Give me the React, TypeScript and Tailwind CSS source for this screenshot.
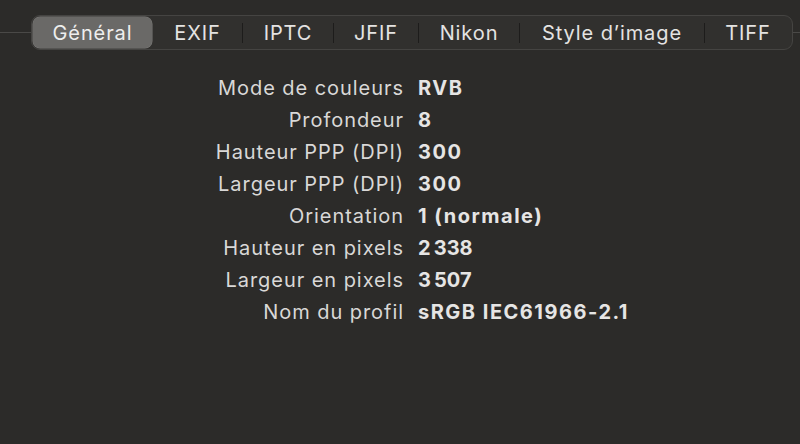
import React from "react";

const tabs = [
  { label: "Général", w: "w-[119px]" },
  { label: "EXIF", w: "w-[89px]" },
  { label: "IPTC", w: "w-[90px]" },
  { label: "JFIF", w: "w-[84px]" },
  { label: "Nikon", w: "w-[100px]" },
  { label: "Style d’image", w: "w-[184px]" },
  { label: "TIFF", w: "w-[86px]" },
];

const rows = [
  ["Mode de couleurs", "RVB"],
  ["Profondeur", "8"],
  ["Hauteur PPP (DPI)", "300"],
  ["Largeur PPP (DPI)", "300"],
  ["Orientation", "1 (normale)"],
  ["Hauteur en pixels", "2\u202F338"],
  ["Largeur en pixels", "3\u202F507"],
  ["Nom du profil", "sRGB IEC61966-2.1"],
];

const App = () => {
  const selected = 0;

  return (
    <div className="h-[444px] w-[800px] overflow-hidden bg-[#2c2b29] font-['Inter',sans-serif] text-[#dddcdb]">
      {/* Tab bar */}
      <div className="flex items-center pt-[15px]">
        <div className="h-px w-[31px] bg-[#4a4947]" />
        <div className="flex h-[35px] items-center rounded-[9px] border border-[#454442] bg-[#31302e] px-px">
          {tabs.map((tab, i) => (
            <React.Fragment key={tab.label}>
              {i > 0 && (
                <div
                  className={`h-[20px] w-px ${
                    i === selected || i === selected + 1 ? "bg-transparent" : "bg-[#1d1c1b]"
                  }`}
                />
              )}
              <div
                className={`flex h-[31px] items-center justify-center text-[20px] tracking-[0.9px] ${tab.w} ${
                  i === selected ? "rounded-[7px] bg-[#6a6967] text-[#eeeeee] shadow-[0_0_0_0.5px_#7a7977]" : "text-[#e4e3e2]"
                }`}
              >
                {tab.label}
              </div>
            </React.Fragment>
          ))}
        </div>
        <div className="h-px flex-1 bg-[#4a4947]" />
      </div>

      {/* Properties */}
      <div className="mt-[22px] grid grid-cols-[404px_1fr] gap-x-[14px]">
        {rows.map(([label, value]) => (
          <React.Fragment key={label}>
            <div className="h-[32px] text-right text-[20px] leading-[32px] tracking-[0.95px] text-[#d9d8d7]">{label}</div>
            <div className="h-[32px] text-[20px] font-bold leading-[32px] tracking-[1.5px] text-[#e6e5e4]">{value}</div>
          </React.Fragment>
        ))}
      </div>
    </div>
  );
};

export default App;
